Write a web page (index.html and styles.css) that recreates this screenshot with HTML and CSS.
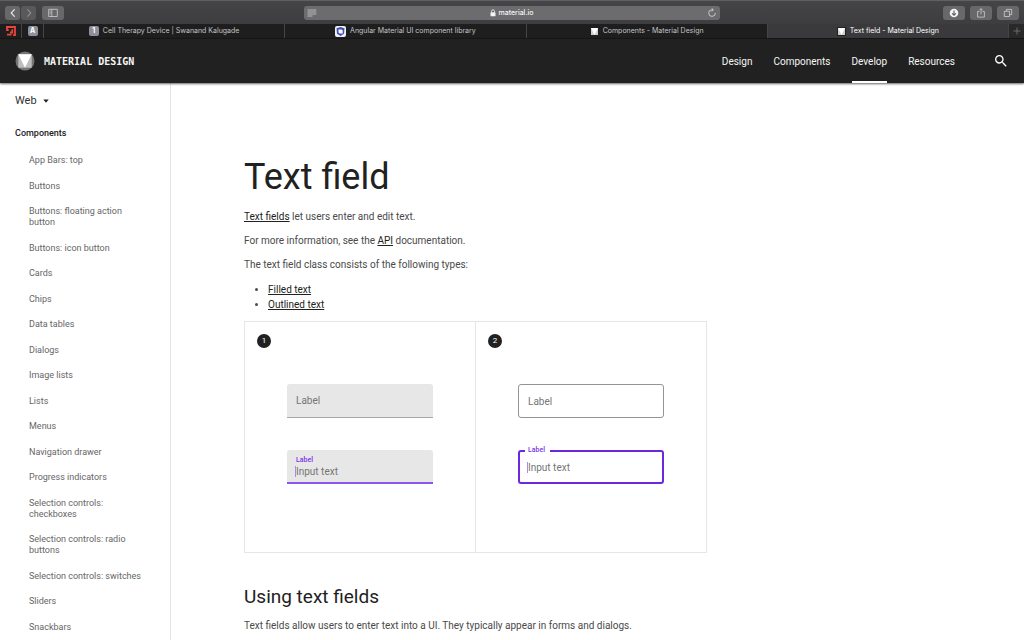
FILE: index.html
```html
<!DOCTYPE html>
<html lang="en">
<head>
<meta charset="utf-8">
<title>Text field - Material Design</title>
<link rel="stylesheet" href="styles.css">
</head>
<body>
<div class="toolbar">
  <div class="tool-group">
    <div class="pair">
      <button class="tool tool-small" aria-label="Back"><svg width="12" height="12" viewBox="0 0 12 12"><path d="M7.4 2.6 4.2 6l3.2 3.4" fill="none" stroke="#e4e4e5" stroke-width="1.2" stroke-linecap="round" stroke-linejoin="round"/></svg></button>
      <button class="tool tool-small" aria-label="Forward"><svg width="12" height="12" viewBox="0 0 12 12"><path d="M4.6 2.6 7.8 6 4.6 9.4" fill="none" stroke="#8c8c8e" stroke-width="1.1" stroke-linecap="round" stroke-linejoin="round"/></svg></button>
    </div>
    <button class="tool" aria-label="Show sidebar"><svg width="12" height="12" viewBox="0 0 12 12"><path d="M1.7 2.3h8.6v7.2H1.7zM4.8 2.3v7.2M2.7 4h1M2.7 5.4h1M2.7 6.8h1" fill="none" stroke="#cfcfd0" stroke-width=".8"/></svg></button>
  </div>
  <div class="address">
    <svg width="10" height="10" viewBox="0 0 10 10"><path d="M.5 2h8.8M.5 4h8.8M.5 6h8.8M.5 8h5" stroke="#b9b9bb" stroke-width="1"/></svg>
    <span class="site"><svg width="6" height="8" viewBox="0 0 6 8"><rect x=".5" y="3.3" width="5" height="4" rx=".6" fill="#f3f3f3"/><path d="M1.5 3.5V2.3a1.5 1.5 0 0 1 3 0v1.2" fill="none" stroke="#f3f3f3" stroke-width=".8"/></svg>material.io</span>
    <button class="reload" aria-label="Reload"><svg width="10" height="10" viewBox="0 0 10 10"><path d="M8.3 5A3.3 3.3 0 1 1 5 1.8h.8" fill="none" stroke="#dedede" stroke-width=".8"/><path d="M4.6.2 6.4 1.8 4.6 3.4" fill="none" stroke="#dedede" stroke-width=".8"/></svg></button>
  </div>
  <div class="tool-group tool-end">
    <button class="tool" aria-label="Downloads"><svg width="12" height="12" viewBox="0 0 12 12"><circle cx="6" cy="6" r="4.3" fill="#f2f2f2"/><path d="M6 3.5v4.6M4.1 6.3 6 8.2l1.9-1.9" fill="none" stroke="#5c5c5e" stroke-width="1.1"/></svg></button>
    <button class="tool" aria-label="Share"><svg width="12" height="12" viewBox="0 0 12 12"><path d="M4.4 4.5H2.6v5.6h6.8V4.5H7.6M6 7.3V1.7M4.3 3.3 6 1.6l1.7 1.7" fill="none" stroke="#cfcfd0" stroke-width=".8"/></svg></button>
    <button class="tool" aria-label="Show tabs"><svg width="12" height="12" viewBox="0 0 12 12"><path d="M2.3 4.3h5.2v5.2H2.3zM4.4 4.1V2.4h5.3v5.2H7.7" fill="none" stroke="#cfcfd0" stroke-width=".8"/></svg></button>
  </div>
</div>

<nav class="tabs" aria-label="Browser tabs">
  <a class="pin" href="#" aria-label="Pinned tab"><svg width="10" height="10" viewBox="0 0 10 10"><path d="M0 1h9V9H7.2M1 8.7h4.5M1 1v3h1.7M6.3 3.3v3.2H4" fill="none" stroke="#e8453c" stroke-width="1.8"/></svg></a>
  <a class="pin" href="#"><span class="letter">A</span></a>
  <a class="tab" href="#"><span class="letter">1</span>Cell Therapy Device | Swanand Kalugade</a>
  <a class="tab" href="#"><svg width="11" height="11" viewBox="0 0 11 11"><rect width="11" height="11" rx="2" fill="#f1f1f5"/><path d="M5.5 1 9.5 2.3 9 7.8 5.5 10 2 7.8 1.5 2.3z" fill="#3f51b5"/><path d="m3.5 3.6 3 0 1.2 1V7.5H4.7L3.5 6.5z" fill="#fff"/></svg>Angular Material UI component library</a>
  <a class="tab" href="#"><svg width="9" height="9" viewBox="0 0 9 9"><path d="M1 1h7v7H1z" fill="#cfcfcf"/><path d="M1 1h7L4.5 8z" fill="#fff"/></svg>Components - Material Design</a>
  <a class="tab tab-current" href="#" aria-current="page"><svg width="9" height="9" viewBox="0 0 9 9"><path d="M0 0h9v9H0z" fill="#212121"/><path d="M1 1h7v7H1z" fill="#cfcfcf"/><path d="M1 1h7L4.5 8z" fill="#fff"/></svg>Text field - Material Design</a>
  <button class="new-tab" aria-label="New tab"><svg width="8" height="8" viewBox="0 0 8 8"><path d="M4 .5v7M.5 4h7" stroke="#7b7b7d" stroke-width=".8"/></svg></button>
</nav>

<header class="header">
  <a class="brand" href="#">
    <svg width="20" height="20" viewBox="0 0 20 20"><circle cx="10" cy="10" r="9.5" fill="#757575"/><path d="M3.3 3.3h13.4v13.4H3.3z" fill="#bdbdbd"/><path d="M3.3 3.3h13.4L10 16.7z" fill="#fff"/></svg>
    MATERIAL DESIGN
  </a>
  <nav class="menu" aria-label="Main">
    <a href="#">Design</a>
    <a href="#">Components</a>
    <a class="current" href="#" aria-current="page">Develop</a>
    <a href="#">Resources</a>
  </nav>
  <button class="search" aria-label="Search"><svg width="16" height="16" viewBox="0 0 24 24"><path fill="#fff" d="M15.5 14h-.79l-.28-.27A6.471 6.471 0 0 0 16 9.5 6.5 6.5 0 1 0 9.5 16c1.61 0 3.09-.59 4.23-1.57l.27.28v.79l5 4.99L20.49 19l-4.99-5zm-6 0C7.01 14 5 11.99 5 9.5S7.01 5 9.5 5 14 7.01 14 9.5 11.99 14 9.5 14z"/></svg></button>
</header>

<div class="page">
  <aside class="sidebar">
    <label class="platform">
      <select aria-label="Platform"><option>Web</option></select>
      <svg width="6" height="4" viewBox="0 0 6 4"><path d="M.3.5h5.4L3 3.7z" fill="#212121"/></svg>
    </label>
    <h2 class="section">Components</h2>
    <ul class="links">
      <li><a href="#">App Bars: top</a></li>
      <li><a href="#">Buttons</a></li>
      <li><a href="#">Buttons: floating action button</a></li>
      <li><a href="#">Buttons: icon button</a></li>
      <li><a href="#">Cards</a></li>
      <li><a href="#">Chips</a></li>
      <li><a href="#">Data tables</a></li>
      <li><a href="#">Dialogs</a></li>
      <li><a href="#">Image lists</a></li>
      <li><a href="#">Lists</a></li>
      <li><a href="#">Menus</a></li>
      <li><a href="#">Navigation drawer</a></li>
      <li><a href="#">Progress indicators</a></li>
      <li><a href="#">Selection controls: checkboxes</a></li>
      <li><a href="#">Selection controls: radio buttons</a></li>
      <li><a href="#">Selection controls: switches</a></li>
      <li><a href="#">Sliders</a></li>
      <li><a href="#">Snackbars</a></li>
    </ul>
  </aside>

  <main class="content">
    <h1>Text field</h1>
    <p><a href="#">Text fields</a> let users enter and edit text.</p>
    <p>For more information, see the <a href="#">API</a> documentation.</p>
    <p>The text field class consists of the following types:</p>
    <ul class="types">
      <li><a href="#">Filled text</a></li>
      <li><a href="#">Outlined text</a></li>
    </ul>
    <div class="examples">
      <section class="example">
        <span class="number">1</span>
        <div class="field filled">
          <label for="filled-rest">Label</label>
          <input id="filled-rest" type="text">
        </div>
        <div class="field filled active">
          <label for="filled-active">Label</label>
          <input id="filled-active" type="text" value="Input text">
        </div>
      </section>
      <section class="example">
        <span class="number">2</span>
        <div class="field outlined">
          <label for="outlined-rest">Label</label>
          <input id="outlined-rest" type="text">
        </div>
        <div class="field outlined active">
          <label for="outlined-active">Label</label>
          <input id="outlined-active" type="text" value="Input text">
        </div>
      </section>
    </div>
    <h2>Using text fields</h2>
    <p>Text fields allow users to enter text into a UI. They typically appear in forms and dialogs.</p>
  </main>
</div>
</body>
</html>
```
FILE: styles.css
```css
* {
  box-sizing: border-box;
}

body {
  display: flex;
  flex-direction: column;
  min-height: 100vh;
  margin: 0;
  background: #fff;
  color: #4a4a4a;
  font: 10px/15px Roboto, sans-serif;
}

h1, h2, p, ul {
  margin: 0;
  padding: 0;
}

a {
  color: inherit;
  text-decoration: none;
}

button, select, input {
  margin: 0;
  padding: 0;
  border: 0;
  background: none;
  color: inherit;
  font: inherit;
}

svg {
  display: block;
  flex: none;
}

/* Browser toolbar */
.toolbar {
  display: grid;
  grid-template-columns: 1fr 41% 1fr;
  align-items: center;
  height: 24px;
  padding: 0 5px;
  border-top: 1px solid #606062;
  background: linear-gradient(#454547, #3d3d3f);
}

.tool-group {
  display: flex;
  gap: 6px;
}

.tool-end {
  justify-content: flex-end;
  gap: 5px;
}

.pair {
  display: flex;
  gap: 1px;
}

.tool {
  display: grid;
  place-items: center;
  width: 22px;
  height: 14px;
  border-radius: 3px;
  background: #68686a;
}

.tool-small {
  width: 15px;
}

.tool-small + .tool-small {
  background: #59595b;
}

.address {
  display: flex;
  align-items: center;
  justify-content: space-between;
  height: 14px;
  padding: 0 3px;
  border-radius: 3px;
  background: #6c6c6e;
  color: #f5f5f5;
  font: 500 7px/14px Inter, sans-serif;
}

.site {
  display: flex;
  align-items: center;
  gap: 2px;
}

/* Browser tabs */
.tabs {
  display: flex;
  height: 15px;
  background: #1e1e1f;
  border-bottom: 1px solid #161616;
  color: #c4c4c6;
  font: 7px/14px Inter, sans-serif;
}

.tabs a {
  display: flex;
  align-items: center;
  justify-content: center;
  gap: 4px;
  border-right: 1px solid #454547;
}

.pin {
  width: 22px;
}

.tab {
  flex: 1;
}

.tabs .tab-current {
  background: #3a3a3c;
  color: #fff;
}

.letter {
  width: 10px;
  height: 10px;
  border-radius: 2px;
  background: #8f909c;
  color: #fff;
  font-weight: 700;
  line-height: 10px;
  text-align: center;
}

.new-tab {
  display: grid;
  place-items: center;
  width: 15px;
  background: #29292a;
}

/* Site header */
.header {
  position: relative;
  display: flex;
  align-items: stretch;
  height: 44px;
  padding: 0 15px;
  background: #212121;
  box-shadow: 0 1px 2px rgba(0, 0, 0, .6);
  color: #f5f5f5;
}

.brand {
  display: flex;
  align-items: center;
  gap: 9px;
  margin-right: auto;
  font: bold 10px/15px "DejaVu Sans Mono", monospace;
}

.menu {
  display: flex;
  gap: 21px;
}

.menu a {
  padding-top: 4px;
  border-bottom: 2px solid transparent;
  line-height: 38px;
}

.menu .current {
  border-color: #fff;
}

.search {
  margin-left: 38px;
}

/* Page */
.page {
  display: flex;
  flex: 1;
}

.sidebar {
  display: flex;
  flex: none;
  flex-direction: column;
  width: 171px;
  padding: 10px 15px 7px;
  border-right: 1px solid #e4e4e4;
}

.platform {
  display: flex;
  align-items: center;
  gap: 6px;
  color: #333;
  font-size: 11px;
}

.platform select {
  appearance: none;
}

.section {
  margin: 18px 0 14px;
  color: #212121;
  font-size: 9px;
  font-weight: 500;
  line-height: 15px;
}

.links {
  display: flex;
  flex: 1;
  flex-direction: column;
  justify-content: space-between;
  padding: 0 14px;
  color: #666;
  font-size: 9px;
  line-height: 11px;
  list-style: none;
}

.content {
  flex: 1;
  max-width: 536px;
  padding: 72px 0 6px 73px;
}

.content h1 {
  margin-bottom: 10px;
  color: #212121;
  font-size: 36px;
  font-weight: 400;
  line-height: 44px;
}

.content p {
  margin-bottom: 9px;
}

.content h2 {
  margin: 30px 0 7px;
  color: #212121;
  font-size: 19px;
  font-weight: 400;
  line-height: 28px;
}

.content h2 + p {
  margin-bottom: 0;
}

.content a {
  color: #212121;
  text-decoration: underline;
}

.types {
  margin: 10px 0 9px;
  padding-left: 24px;
}

/* Field examples */
.examples {
  display: flex;
  border: 1px solid #e6e6e6;
}

.example {
  flex: 1;
  padding: 12px 42px 68px;
}

.example + .example {
  border-left: 1px solid #e6e6e6;
}

.number {
  display: block;
  width: 14px;
  height: 14px;
  margin: 0 0 36px -30px;
  border-radius: 50%;
  background: #212121;
  color: #fff;
  font-size: 8px;
  line-height: 14px;
  text-align: center;
}

.field {
  position: relative;
  height: 34px;
  color: #757575;
}

.field + .field {
  margin-top: 32px;
}

.field label {
  position: absolute;
  top: 9px;
  left: 9px;
}

.field input {
  width: 100%;
  height: 100%;
  padding: 0 10px;
}

.filled {
  border-bottom: 1px solid #a8a8a8;
  border-radius: 3px 3px 0 0;
  background: #e7e7e7;
}

.filled.active {
  border-bottom: 2px solid #8a56ec;
}

.outlined {
  border: 1px solid #949494;
  border-radius: 3px;
}

.outlined.active {
  border: 2px solid #6c28e0;
}

.active label {
  top: 3px;
  color: #7b35e8;
  font-size: 7px;
  font-weight: 500;
}

.active input {
  height: 11px;
  margin: 16px 0 0 8px;
  padding: 0;
  width: 80%;
  border-left: 1px solid #a98bea;
  line-height: 11px;
}

.outlined.active label {
  top: -9px;
  left: 5px;
  padding: 0 5px 0 3px;
  background: #fff;
}

.outlined.active input {
  margin: 10px 0 0 7px;
}
```
